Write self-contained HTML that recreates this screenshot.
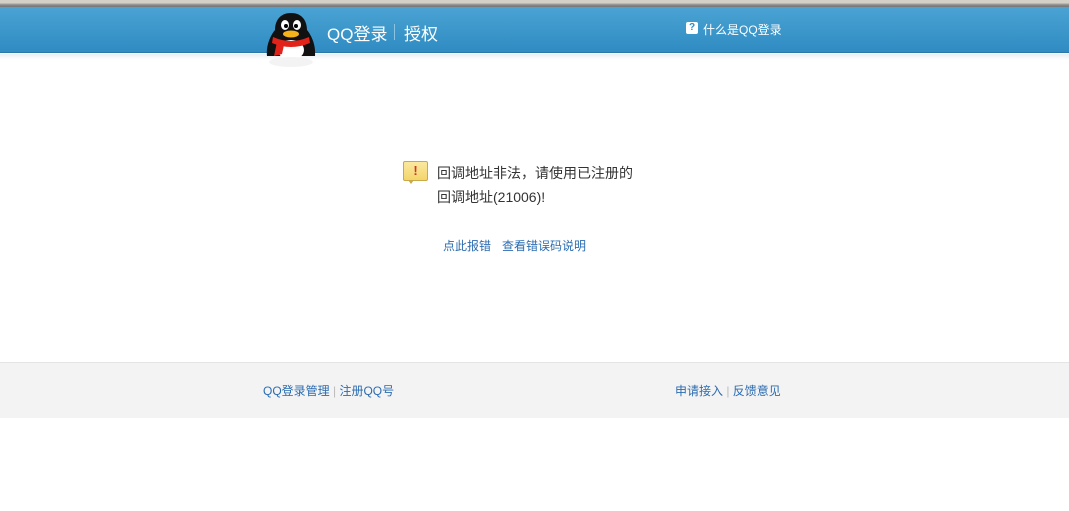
<!DOCTYPE html>
<html><head><meta charset="utf-8"><style>
*{margin:0;padding:0;box-sizing:border-box}
body{width:1069px;height:511px;background:#fff;font-family:"Liberation Sans","Noto Sans CJK SC",sans-serif;position:relative;overflow:hidden}
.top{position:absolute;left:0;top:0;width:1069px;height:7px;background:linear-gradient(#d4d0c8 0,#d4d0c8 3px,#a0a0a0 4px,#7a7a7a 6px)}
.hdr{position:absolute;left:0;top:7px;width:1069px;height:46px;background:linear-gradient(#4aa3d3,#2f8bc2);border-bottom:1px solid #2a78a8}
.shadow{position:absolute;left:0;top:54px;width:1069px;height:6px;background:linear-gradient(#e8eef2,#fff)}
.t{position:absolute;color:#fff;font-size:17px;top:20px}
.a{color:#2b6cb0;font-size:12px;position:absolute;text-decoration:none}
.foot{position:absolute;left:0;top:362px;width:1069px;height:56px;background:#f3f3f3;border-top:1px solid #e4e4e4}
.sep{color:#bbb}
</style></head><body>
<div class="top"></div>
<div class="hdr"></div>
<div class="shadow"></div>
<svg style="position:absolute;left:264px;top:12px" width="54" height="56" viewBox="0 0 54 56">
<path d="M27 1 C15 1 11 10 11 18 C6 24 2 34 3 44 L51 44 C52 34 48 24 43 18 C43 10 39 1 27 1Z" fill="#111"/>
<ellipse cx="27" cy="38" rx="13" ry="10" fill="#fff"/>
<ellipse cx="21" cy="13" rx="4" ry="5" fill="#fff"/><ellipse cx="33" cy="13" rx="4" ry="5" fill="#fff"/>
<circle cx="22" cy="14" r="2" fill="#000"/><circle cx="32" cy="14" r="2" fill="#000"/>
<ellipse cx="27" cy="22" rx="8" ry="3.5" fill="#f6b21a"/>
<path d="M9 25 Q27 33 45 25 L46 31 Q27 39 8 31Z" fill="#e2231a"/>
<path d="M13 30 L10 44 L18 42 L20 33Z" fill="#e2231a"/>
<ellipse cx="27" cy="50" rx="22" ry="5" fill="#eee" opacity=".7"/>
</svg>
<div class="t" style="left:327px">QQ登录</div>
<div style="position:absolute;left:394px;top:24px;width:1px;height:16px;background:#8cc3e3"></div>
<div class="t" style="left:404px">授权</div>
<div style="position:absolute;left:686px;top:22px;width:12px;height:12px;background:#fff;border-radius:2px;color:#2f8bc2;font-size:10px;font-weight:bold;text-align:center;line-height:12px">?</div>
<div class="t" style="left:703px;top:21px;font-size:12px">什么是QQ登录</div>
<div style="position:absolute;left:403px;top:161px;width:25px;height:20px;background:linear-gradient(#fbe9a0,#f3d56a);border:1px solid #c9a94a;border-radius:2px;color:#d4332a;font-weight:bold;font-size:13px;text-align:center;line-height:18px">!</div>
<div style="position:absolute;left:408px;top:180px;width:0;height:0;border-left:3px solid transparent;border-right:3px solid transparent;border-top:4px solid #c9a94a"></div>
<div style="position:absolute;left:437px;top:161px;font-size:14px;color:#333;line-height:24px">回调地址非法，请使用已注册的<br>回调地址(21006)!</div>
<a class="a" style="left:443px;top:237px">点此报错</a>
<a class="a" style="left:502px;top:237px">查看错误码说明</a>
<div class="foot"></div>
<div class="a" style="left:263px;top:382px">QQ登录管理 <span class="sep">|</span> 注册QQ号</div>
<div class="a" style="left:675px;top:382px">申请接入 <span class="sep">|</span> 反馈意见</div>
</body></html>
